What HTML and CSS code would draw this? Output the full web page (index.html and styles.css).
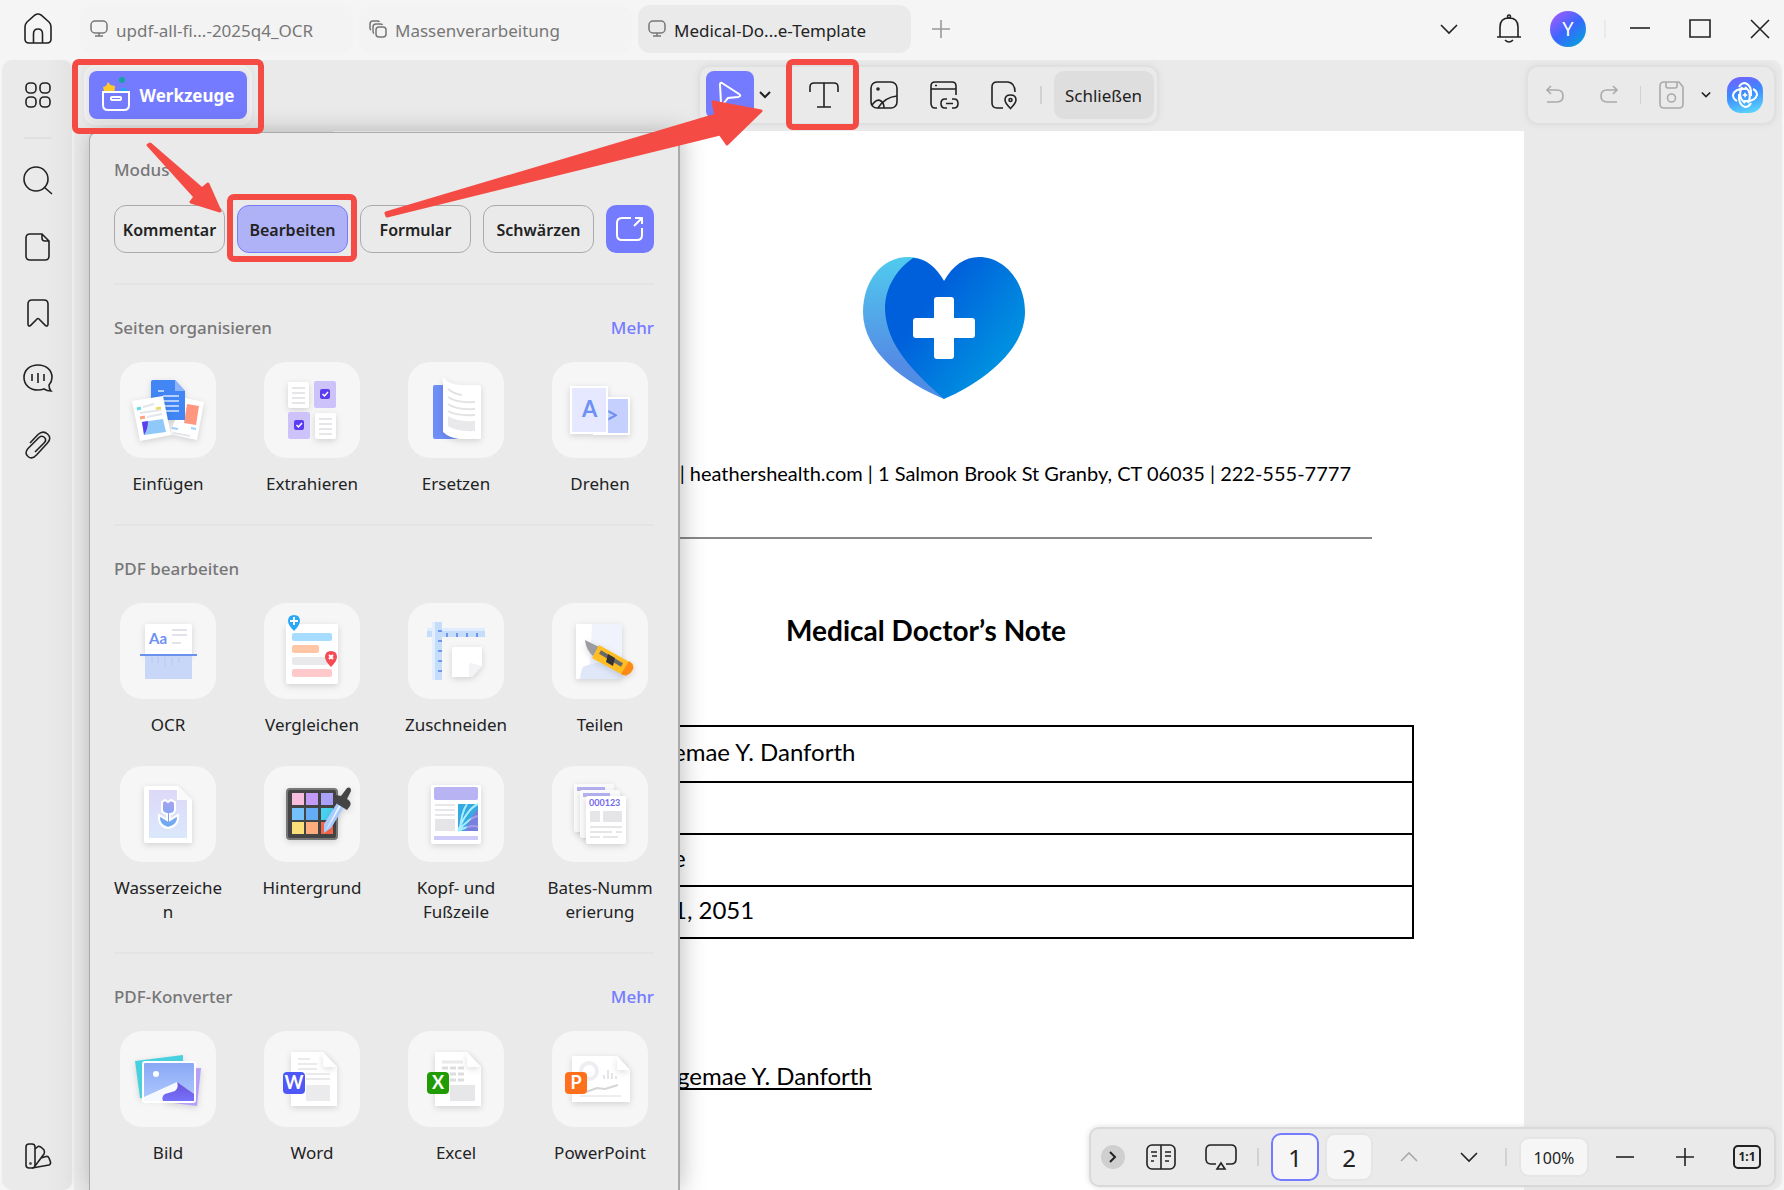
FILE: index.html
```html
<!DOCTYPE html>
<html lang="de">
<head>
    <meta charset="UTF-8">
    <meta name="viewport" content="width=device-width, initial-scale=1.0">
    <title>Medical-Doctor-Note-Template</title>
    <link rel="stylesheet" href="styles.css">
</head>
<body>

    <!-- title bar with the document tabs -->
    <header class="titlebar">
        <button class="icon-btn home" aria-label="Start">
            <svg width="32" height="34" viewBox="0 0 32 34"><path d="M3 15 Q3 12 5 10 L13 3 Q16 1 19 3 L27 10 Q29 12 29 15 V27 Q29 31 25 31 H7 Q3 31 3 27 Z M11.500 31 V22 Q11.500 17 16 17 Q20.500 17 20.500 22 V31"/></svg>
        </button>
        <nav class="tabs">
            <button class="tab">
                <svg width="18" height="18" viewBox="0 0 18 18"><rect x="1" y="1" width="16" height="12" rx="4"/><path d="M9 13 V16 M5 16 H13"/></svg>
                updf-all-fi...-2025q4_OCR
            </button>
            <button class="tab">
                <svg width="18" height="18" viewBox="0 0 18 18"><rect x="7" y="7" width="10" height="10" rx="3"/><path d="M5 13.500 Q4 13 4 11 V7 Q4 4 7 4 H11 Q13 4 13.500 5 M2 10 Q1 9.500 1 8 V4 Q1 1 4 1 H8 Q10 1 10.500 2"/></svg>
                Massenverarbeitung
            </button>
            <button class="tab active">
                <svg width="18" height="18" viewBox="0 0 18 18"><rect x="1" y="1" width="16" height="12" rx="4"/><path d="M9 13 V16 M5 16 H13"/></svg>
                Medical-Do...e-Template
            </button>
            <button class="icon-btn add" aria-label="Neuer Tab">
                <svg width="18" height="18" viewBox="0 0 18 18"><path d="M9 0 V18 M0 9 H18"/></svg>
            </button>
        </nav>
        <div class="window-tools">
            <button class="icon-btn" aria-label="Tabliste"><svg width="18" height="10" viewBox="0 0 18 10"><path d="M1 1 L9 9 L17 1"/></svg></button>
            <button class="icon-btn" aria-label="Mitteilungen"><svg width="26" height="30" viewBox="0 0 26 30"><path d="M4 23 V13 Q4 4 13 4 Q22 4 22 13 V23 M1 23 H25 M9 26 Q13 30 17 26"/><circle cx="13" cy="2.500" r="1.500"/></svg></button>
            <button class="avatar">Y</button>
            <span class="sep"></span>
            <button class="icon-btn" aria-label="Minimieren"><svg width="22" height="22" viewBox="0 0 22 22"><path d="M1 10 H21"/></svg></button>
            <button class="icon-btn" aria-label="Maximieren"><svg width="22" height="20" viewBox="0 0 22 20"><path d="M1 1 H21 V18 H1 Z"/></svg></button>
            <button class="icon-btn" aria-label="Fenster schließen"><svg width="20" height="20" viewBox="0 0 20 20"><path d="M1 1 L19 19 M19 1 L1 19"/></svg></button>
        </div>
    </header>

    <div class="main">
        <!-- left rail -->
        <aside class="rail">
            <button class="icon-btn" aria-label="Übersicht"><svg width="28" height="28" viewBox="0 0 28 28"><rect x="2" y="2" width="10" height="10" rx="4"/><rect x="16" y="2" width="10" height="10" rx="4"/><rect x="2" y="16" width="10" height="10" rx="4"/><rect x="16" y="16" width="10" height="10" rx="4"/></svg></button>
            <hr>
            <button class="icon-btn" aria-label="Suche"><svg width="30" height="30" viewBox="0 0 30 30"><circle cx="13" cy="13" r="12"/><path d="M21 21 L29 28"/></svg></button>
            <button class="icon-btn" aria-label="Seiten"><svg width="26" height="30" viewBox="0 0 26 30"><path d="M5 2 H17 L24 9 V24 Q24 28 20 28 H5 Q1 28 1 24 V6 Q1 2 5 2 Z M17 2 V6 Q17 9 20 9 H24"/></svg></button>
            <button class="icon-btn" aria-label="Lesezeichen"><svg width="24" height="30" viewBox="0 0 24 30"><path d="M2 26 V6 Q2 2 6 2 H18 Q22 2 22 6 V26 Q22 29 19.500 27.500 L13 21 Q12 20 11 21 L4.500 27.500 Q2 29 2 26 Z"/></svg></button>
            <button class="icon-btn" aria-label="Kommentare"><svg width="32" height="32" viewBox="0 0 32 32"><path d="M27 22 Q30 18.500 30 14.500 C30 7 24 2 16 2 C8 2 2 7 2 14.500 C2 22 8 27 16 27 Q19 27 22 26 Q25 28 29 28 Q27 26 27 22 Z M10 11 V18 M16 10 V20 M22 11 V18"/></svg></button>
            <button class="icon-btn" aria-label="Anlagen"><svg width="28" height="30" viewBox="0 0 28 30"><path d="M6 13 L14 4.500 Q19 0 23.500 4 Q28 8 23.500 13 L12.500 25 Q8 30 4 26.500 Q0 23 4 18.500 L15 7.500 Q18 5 20.500 7.500 Q23 10 20 13 L11 22"/></svg></button>
            <button class="icon-btn bottom" aria-label="Design"><svg width="28" height="28" viewBox="0 0 28 28"><rect x="2" y="2" width="9" height="24" rx="3"/><path d="M11 7 L14 4.500 Q16 4 18 6 L20 8 Q21 10 20 12 L11 24 M17 16 L22 14.500 Q24 14 25 16 L26.500 20 Q27 22 25 23 L8 26"/><circle cx="6.500" cy="21.500" r="0.500"/></svg></button>
        </aside>

        <section class="workspace">
            <div class="toolbars">
                <div class="toolbar tools-start">
                    <button class="tools-btn">
                        <svg width="28" height="32" viewBox="0 0 28 32">
                            <path d="M1 7 L4 6 L6 2 L8.500 5 L13 6 L12.500 11 H2 Z" fill="#ffca28" stroke="none"/>
                            <path d="M17 11 Q22 4 26 11 Z" fill="#29a3f5" stroke="none"/>
                            <circle cx="20" cy="0" r="3" fill="#14a3a0" stroke="none"/>
                            <path d="M1 12 H27 V25 Q27 30 22 30 H6 Q1 30 1 25 Z"/><rect x="9" y="17" width="10" height="3" rx="1"/>
                        </svg>
                        Werkzeuge
                    </button>
                </div>
                <div class="toolbar edit-tools">
                    <button class="select-btn" aria-label="Auswahl"><svg width="24" height="28" viewBox="0 0 24 28"><path d="M4 2 Q2 1 2 4 L3 22 Q4 25 6 22 L10 17 L20 16 Q24 15 21 13 Z"/></svg></button>
                    <button class="icon-btn mini" aria-label="Auswahlmodus"><svg width="12" height="8" viewBox="0 0 12 8"><path d="M1 1 L6 6 L11 1"/></svg></button>
                    <button class="icon-btn" aria-label="Text"><svg width="30" height="28" viewBox="0 0 30 28"><path d="M1 11 V6 Q1 2 5 2 H25 Q29 2 29 6 V11 M15 2 V26 M8 26 H22"/></svg></button>
                    <button class="icon-btn" aria-label="Bild einfügen"><svg width="30" height="30" viewBox="0 0 30 30"><rect x="2" y="2" width="26" height="26" rx="6"/><circle cx="9" cy="9" r="1"/><path d="M3 25 Q8 18 12 21 Q15 23 15 28 M9 28 Q16 17 28 16"/></svg></button>
                    <button class="icon-btn" aria-label="Link"><svg width="30" height="30" viewBox="0 0 30 30"><path d="M8 28 H6 Q2 28 2 23 V6 Q2 2 6 2 H23 Q27 2 27 6 V15 M2 9 H27 M6 5.500 H8"/><path d="M18 28 H16 Q12 28 12 23.500 Q12 19 16 19 H18 M23 19 H25 Q29 19 29 23.500 Q29 28 25 28 H23 M17 23.500 H24"/></svg></button>
                    <button class="icon-btn" aria-label="Ort"><svg width="28" height="30" viewBox="0 0 28 30"><path d="M13 28 H7 Q2 28 2 23 V7 Q2 2 7 2 H18 Q25 3 25 12"/><path d="M20.500 28.500 Q15 23 15 20 Q15 15 20.500 15 Q26 15 26 20 Q26 23 20.500 28.500 Z"/><circle cx="20.500" cy="20" r="1.500"/></svg></button>
                    <span class="sep"></span>
                    <button class="close-btn">Schließen</button>
                </div>
                <div class="toolbar file-tools">
                    <button class="icon-btn off" aria-label="Rückgängig"><svg width="20" height="20" viewBox="0 0 20 20"><path d="M6 1 L2 5 L6 9 M2 5 H12 Q18 5 18 11 Q18 17 12 17 H2"/></svg></button>
                    <button class="icon-btn off" aria-label="Wiederholen"><svg width="20" height="20" viewBox="0 0 20 20"><path d="M14 1 L18 5 L14 9 M18 5 H8 Q2 5 2 11 Q2 17 8 17 H18"/></svg></button>
                    <span class="sep"></span>
                    <button class="icon-btn off" aria-label="Speichern"><svg width="26" height="30" viewBox="0 0 26 30"><path d="M5 2 H20 L24 7 V24 Q24 28 20 28 H5 Q1 28 1 24 V6 Q1 2 5 2 Z M7 2 V6 Q7 8 9 8 H16 Q18 8 18 6 V2"/><circle cx="12.500" cy="18" r="4"/></svg></button>
                    <button class="icon-btn mini" aria-label="Speicheroptionen"><svg width="10" height="8" viewBox="0 0 12 8"><path d="M1 1 L6 6 L11 1"/></svg></button>
                    <button class="ai-btn" aria-label="KI-Assistent">
                        <svg width="26" height="26" viewBox="0 0 26 26"><path d="M7 5 Q9 1 13 1 Q20 3 19 14 M21 7 Q25 9 25 13 Q23 20 12 19 M19 21 Q17 25 13 25 Q6 23 7 12 M5 19 Q1 17 1 13 Q3 6 14 7 M10 5 Q5 15 13 21 M16 21 Q21 11 13 5"/><path d="M13 10 L14 12 L16 13 L14 14 L13 16 L12 14 L10 13 L12 12 Z" fill="#fff" stroke="none"/></svg>
                    </button>
                </div>
            </div>

            <!-- the open document -->
            <article class="paper">
                <svg class="logo" width="162" height="144" viewBox="0 0 162 144">
                    <defs>
                        <linearGradient id="heartBlue" x1="0.2" y1="0.2" x2="1" y2="0.8"><stop offset="0.15" stop-color="#005fdb"/><stop offset="0.8" stop-color="#008fe0"/></linearGradient>
                        <linearGradient id="heartEdge" x1="0" y1="0" x2="0" y2="1"><stop offset="0" stop-color="#50cbee"/><stop offset="0.75" stop-color="#548be5"/><stop offset="1" stop-color="#4a8fe3"/></linearGradient>
                    </defs>
                    <path d="M81 25 C71 8 59 1 45 1 C19 1 0 25 0 56 C0 96 42 127 81 143 Z" fill="url(#heartEdge)"/>
                    <path d="M81 25 C73 11 62 2 50 2 C34 13 22 31 22 53 C23 89 50 115 81 143 C120 126 162 94 162 56 C162 25 141 1 116 1 C102 1 90 9 81 25 Z" fill="url(#heartBlue)"/>
                    <path d="M74 41 H88 Q91 41 91 44 V62 H109 Q112 62 112 65 V79 Q112 82 109 82 H91 V100 Q91 103 88 103 H74 Q71 103 71 100 V82 H53 Q50 82 50 79 V65 Q50 62 53 62 H71 V44 Q71 41 74 41 Z" fill="#fff"/>
                </svg>
                <p class="contact">p | heathershealth.com | 1 Salmon Brook St Granby, CT 06035 | 222-555-7777</p>
                <hr>
                <h1>Medical Doctor’s Note</h1>
                <table>
                    <tr><td>emae Y. Danforth</td></tr>
                    <tr><td></td></tr>
                    <tr><td>e</td></tr>
                    <tr><td>1, 2051</td></tr>
                </table>
                <p class="signed"><u>gemae Y. Danforth</u></p>
            </article>

            <!-- tools menu -->
            <div class="panel">
                <h2>Modus</h2>
                <div class="modes">
                    <button class="mode">Kommentar</button>
                    <button class="mode active">Bearbeiten</button>
                    <button class="mode">Formular</button>
                    <button class="mode">Schwärzen</button>
                    <button class="open-btn" aria-label="In neuem Fenster öffnen"><svg width="28" height="26" viewBox="0 0 28 26"><path d="M15 2 H6 Q1 2 1 7 V19 Q1 24 6 24 H21 Q26 24 26 19 V12 M19 2 H26 V8 M26 2 L18 10"/></svg></button>
                </div>

                <section class="group">
                    <div class="group-head"><h2>Seiten organisieren</h2><a href="#">Mehr</a></div>
                    <div class="tiles">
                        <button class="tile">
                            <svg class="art" viewBox="0 0 96 96">
                                <g class="shade">
                                    <path d="M65 36 L84 40 L77 78 L49 72 Z" fill="#fff"/><path d="M67 42 L79 44 L76 63 L64 61 Z" fill="#ff9680"/>
                                    <path d="M52 66 L58 67 M71 66 L76 67" stroke="#9bd0ff" stroke-width="2"/><path d="M53 71 L70 74" stroke="#e5e5ea" stroke-width="2"/>
                                    <path d="M33 18 H55 L65 29 V58 H31 V20 Q31 18 33 18 Z" fill="#4285f4"/><path d="M55 18 V29 H65 Z" fill="#8fb4ff"/>
                                    <path d="M38 29 H44 M43 34 H59 M43 39 H59 M43 44 H59 M43 49 H59" stroke="#b5d0ff" stroke-width="2"/>
                                </g>
                                <g class="shade"><path d="M12 39 L43 34 L51 73 L20 79 Z" fill="#fff"/></g>
                                <path d="M22 60 L43 57 L46 70 L24 73 Z" fill="#91c8fa"/><path d="M22 60 L28 59 Q28 67 24 73 Z" fill="#5b40ee"/>
                                <path d="M17 47 L21 46" stroke="#64dce8" stroke-width="3"/><path d="M36 47 L41 46" stroke="#e9dc55" stroke-width="3"/><path d="M20 56 L25 55" stroke="#ffa384" stroke-width="3"/><path d="M23 45 L34 42 M20 51 L41 48 M27 55 L42 52" stroke="#e4e6ee" stroke-width="2"/>
                            </svg>
                            <span>Einfügen</span>
                        </button>
                        <button class="tile">
                            <svg class="art" viewBox="0 0 96 96">
                                <g class="shade"><rect x="24" y="20" width="21" height="26" rx="2" fill="#fff"/><rect x="51" y="51" width="21" height="26" rx="2" fill="#fff"/></g>
                                <rect x="50" y="19" width="22" height="27" rx="2" fill="#cdc3fa"/><rect x="24" y="50" width="22" height="27" rx="2" fill="#cdc3fa"/>
                                <path d="M28 26 H41 M28 31 H41 M28 36 H41 M28 41 H41 M55 57 H68 M55 62 H68 M55 67 H68 M55 72 H68" stroke="#e6e6ea" stroke-width="2"/>
                                <rect x="56" y="27" width="10" height="10" rx="2" fill="#5a3df0"/><rect x="30" y="58" width="10" height="10" rx="2" fill="#5a3df0"/>
                                <path d="M58.500 32 L60.500 34 L64 30 M32.500 63 L34.500 65 L38 61" stroke="#fff" stroke-width="1.500" fill="none"/>
                            </svg>
                            <span>Extrahieren</span>
                        </button>
                        <button class="tile">
                            <svg class="art" viewBox="0 0 96 96">
                                <path d="M27 23 H50 V77 H27 Q25 77 25 75 V25 Q25 23 27 23 Z" fill="#6f8ff8"/>
                                <g class="shade"><path d="M35 15 Q41 23 53 23 H70 Q73 23 73 26 V77 H54 Q42 77 35 70 Z" fill="#fff"/></g>
                                <path d="M40 27 Q46 32 54 33 M40 35 Q48 41 67 40 M40 42 Q48 48 67 47 M40 49 Q48 54 67 53" stroke="#e3e3e6" stroke-width="2" fill="none"/><path d="M40 54 Q48 60 67 59 V69 Q48 70 40 64 Z" fill="#e9e9eb"/>
                            </svg>
                            <span>Ersetzen</span>
                        </button>
                        <button class="tile">
                            <svg class="art" viewBox="0 0 96 96">
                                <g class="shade"><rect x="42" y="36" width="35" height="36" fill="#c6d0ff" stroke="#fff" stroke-width="2"/><text class="art-letter" x="54" y="61">&gt;</text><rect x="19" y="25" width="36" height="46" fill="#e5e8ff" stroke="#fff" stroke-width="2"/></g>
                                <text class="art-letter" x="30" y="55">A</text>
                            </svg>
                            <span>Drehen</span>
                        </button>
                    </div>
                </section>

                <section class="group">
                    <div class="group-head"><h2>PDF bearbeiten</h2></div>
                    <div class="tiles">
                        <button class="tile">
                            <svg class="art" viewBox="0 0 96 96">
                                <g class="shade"><path d="M25 23 Q25 21 27 21 H70 Q72 21 72 23 V52 H25 Z" fill="#fff"/></g>
                                <text class="art-ocr" x="29" y="41">Aa</text><path d="M52 27 H67 M52 32 H67 M52 40 H61" stroke="#e2e2ea" stroke-width="2"/>
                                <path d="M25 53 H72 V76 H25 Z" fill="#c8d7f8"/><path d="M32 54 V60 M38 54 V62 M45 54 V64 M52 54 V62 M59 54 V60" stroke="#bed0f6"/><path d="M20 52 H77" stroke="#6a92ec" stroke-width="2"/>
                            </svg>
                            <span>OCR</span>
                        </button>
                        <button class="tile">
                            <svg class="art" viewBox="0 0 96 96">
                                <g class="shade"><rect x="22" y="21" width="52" height="60" rx="2" fill="#fff"/></g>
                                <rect x="28" y="30" width="40" height="8" rx="2" fill="#a6dcff"/><rect x="28" y="42" width="27" height="8" rx="2" fill="#ffc6a6"/><rect x="28" y="54" width="36" height="8" rx="2" fill="#e9e9eb"/><rect x="28" y="66" width="40" height="8" rx="2" fill="#ffc8cb"/>
                                <path d="M24 18 Q24 12 30 12 Q36 12 36 18 Q36 22 30 28 Q24 22 24 18 Z" fill="#29a8fa"/><path d="M30 14 V22 M26 18 H34" stroke="#fff"/>
                                <path d="M61 54 Q61 48 67 48 Q73 48 73 54 Q73 58 67 64 Q61 58 61 54 Z" fill="#f44b55"/><path d="M65 52 L69 56 M69 52 L65 56" stroke="#fff"/>
                            </svg>
                            <span>Vergleichen</span>
                        </button>
                        <button class="tile">
                            <svg class="art" viewBox="0 0 96 96">
                                <rect x="19" y="25" width="58" height="9" fill="#c6dcfb"/><rect x="19" y="25" width="58" height="3" fill="#dfecff"/><rect x="24" y="19" width="10" height="58" fill="#c6dcfb"/><rect x="24" y="19" width="3" height="58" fill="#e3eeff"/>
                                <path d="M39 30 V34 M49 30 V34 M59 30 V34 M69 30 V34 M30 28 H34 M30 38 H34 M30 48 H34 M30 58 H34 M30 68 H34" stroke="#6b98ed"/>
                                <g class="shade"><path d="M46 44 H74 V63 L64 74 H44 V46 Q44 44 46 44 Z" fill="#fff"/></g><path d="M61 74 V62 Q61 60 63 60 L74 63 L64 74 Z" fill="#f3f3f5"/>
                            </svg>
                            <span>Zuschneiden</span>
                        </button>
                        <button class="tile">
                            <svg class="art" viewBox="0 0 96 96">
                                <g class="shade"><rect x="24" y="21" width="46" height="55" fill="#f0f3fc"/></g><path d="M24 21 H40 L38 60 L34 66 L28 76 H24 Z" fill="#fff"/><path d="M24 76 Q28 62 37 62 L43 60 H70 V76 Z" fill="#dfe7f8"/><path d="M24 76 V21 H34 V60 Q29 64 28 76 Z" fill="#fff"/>
                                <g class="shade"><path d="M33 37 L47 44 L41 53 Q34 47 33 37 Z" fill="#9b9c9f"/><path d="M47 42 L81 61 Q80 70 71 72 L40 55 Z" fill="#ffbd24"/><path d="M77 58 Q84 63 80 68 Q75 75 69 71 Z" fill="#ff8b17"/></g>
                                <path d="M48 49 L70 62" stroke="#68696b" stroke-width="4"/><path d="M56 51 L63 55 L61 63 L54 59 Z" fill="#333"/>
                            </svg>
                            <span>Teilen</span>
                        </button>
                        <button class="tile">
                            <svg class="art" viewBox="0 0 96 96">
                                <defs><linearGradient id="mark" x1="0" y1="0" x2="0" y2="1"><stop offset="0" stop-color="#ddd9f8"/><stop offset="1" stop-color="#dbe8fb"/></linearGradient><linearGradient id="tulip" x1="0" y1="0" x2="0" y2="1"><stop offset="0" stop-color="#a9a3f0"/><stop offset="1" stop-color="#65aaf2"/></linearGradient></defs>
                                <g class="shade"><path d="M26 20 H58 L72 34 V77 H26 Q24 77 24 75 V22 Q24 20 26 20 Z" fill="#fff"/></g>
                                <path d="M29 24 H57 V34 H67 V72 H29 Z" fill="url(#mark)"/><path d="M58 20 V34 H72 Z" fill="#fafafa"/>
                                <path d="M42 36 L45 34 L48 36 L51 34 L55 36 V44 Q54 48 50 48 V54 L58 49 Q59 60 48 62 Q38 60 39 49 L47 54 V48 Q42 47 42 44 Z" fill="url(#tulip)" stroke="#fff" stroke-width="2"/>
                            </svg>
                            <span>Wasserzeiche<br>n</span>
                        </button>
                        <button class="tile">
                            <svg class="art" viewBox="0 0 96 96">
                                <g class="shade"><rect x="23" y="23" width="50" height="50" rx="3" fill="#444" stroke="#777" stroke-width="2"/></g>
                                <path d="M28 27 H40 V39 H28 Z" fill="#f7bddd"/><path d="M42 27 H54 V39 H42 Z" fill="#c39bf6"/><path d="M57 27 H69 V39 H57 Z" fill="#aaa1fb"/>
                                <path d="M28 42 H40 V54 H28 Z" fill="#75c2fb"/><path d="M42 42 H54 V54 H42 Z" fill="#64acf6"/><path d="M57 42 H69 V54 H57 Z" fill="#48d2ef"/>
                                <path d="M28 56 H40 V68 H28 Z" fill="#fbdf79"/><path d="M42 56 H54 V68 H42 Z" fill="#fdac7e"/><path d="M57 56 H69 V68 H57 Z" fill="#fb694b"/>
                                <g class="shade"><path d="M73 37 L80 41 L67 62 L60 67 L60 58 Z" fill="#a8caff"/><path d="M75 39 L77 40 L65 60 L61 66 Z" fill="#eaf3ff"/><path d="M72 29 L77 30 L83 22 Q87 20 87 25 L83 33 Q88 36 86 40 L83 44 L70 36 Z" fill="#444"/></g>
                            </svg>
                            <span>Hintergrund</span>
                        </button>
                        <button class="tile">
                            <svg class="art" viewBox="0 0 96 96">
                                <g class="shade"><rect x="23" y="19" width="50" height="59" rx="2" fill="#fff"/></g><rect x="26" y="21" width="44" height="13" rx="2" fill="#b8b3f3"/>
                                <path d="M27 39 H47 M27 44 H47 M27 49 H47" stroke="#e7e7eb" stroke-width="2"/><rect x="27" y="53" width="20" height="12" fill="#e5e5e8"/><rect x="50" y="38" width="20" height="27" fill="#35a9e0"/>
                                <path d="M50 65 Q59 43 70 38 M50 65 Q62 51 70 50 M50 65 Q64 58 70 61 M52 65 Q53 47 59 38" stroke="#a8edff" stroke-width="2" fill="none"/><path d="M57 65 Q63 50 70 43 V65 Z" fill="#a466d9" opacity="0.6"/><path d="M26 72 H70" stroke="#cecafa" stroke-width="4"/>
                            </svg>
                            <span>Kopf- und<br>Fußzeile</span>
                        </button>
                        <button class="tile">
                            <svg class="art" viewBox="0 0 96 96">
                                <g class="shade"><rect x="22" y="18" width="40" height="48" rx="2" fill="#fafafa"/></g><path d="M25 23 H53" stroke="#b6b1f1" stroke-width="4"/>
                                <g class="shade"><rect x="28" y="24" width="40" height="48" rx="2" fill="#fafafa"/></g><path d="M31 29 H58" stroke="#b6b1f1" stroke-width="4"/>
                                <g class="shade"><rect x="34" y="30" width="40" height="48" rx="2" fill="#fff"/></g><text class="art-number" x="37" y="40">000123</text>
                                <rect x="38" y="45" width="10" height="11" rx="1" fill="#e5e5e7"/><rect x="51" y="45" width="19" height="11" rx="1" fill="#e5e5e7"/><path d="M38 61 H70 M38 66 H60 M64 66 H70 M38 71 H48 M51 71 H66" stroke="#e6e6e8" stroke-width="2"/>
                            </svg>
                            <span>Bates-Numm<br>erierung</span>
                        </button>
                    </div>
                </section>

                <section class="group">
                    <div class="group-head"><h2>PDF-Konverter</h2><a href="#">Mehr</a></div>
                    <div class="tiles">
                        <button class="tile">
                            <svg class="art" viewBox="0 0 96 96">
                                <defs><linearGradient id="sky" x1="0" y1="0" x2="0" y2="1"><stop offset="0" stop-color="#88a7f5"/><stop offset="1" stop-color="#b1cbff"/></linearGradient><linearGradient id="dune" x1="0" y1="0" x2="0" y2="1"><stop offset="0" stop-color="#6855d9"/><stop offset="1" stop-color="#7771fa"/></linearGradient></defs>
                                <g class="shade"><path d="M15 30 L63 24 V68 L20 67 Z" fill="#49d0df"/><path d="M34 39 L81 37 L77 75 L45 71 Z" fill="#b6a0f7"/></g>
                                <rect x="23" y="31" width="52" height="40" rx="2" fill="url(#sky)" stroke="#fff" stroke-width="2"/><path d="M24 66 L57 51 L74 64 V70 H24 Z" fill="#f6faff"/><path d="M57 51 Q59 57 55 60 L45 63 Q41 66 43 70 H74 V63 Z" fill="url(#dune)"/><circle cx="36" cy="43" r="3" fill="#fff"/>
                            </svg>
                            <span>Bild</span>
                        </button>
                        <button class="tile">
                            <svg class="art" viewBox="0 0 96 96">
                                <g class="shade"><path d="M27 21 H59 L73 36 V75 H27 Z" fill="#fff"/></g><g class="shade"><path d="M59 21 V34 Q59 36 62 36 H73 Z" fill="#fff"/></g>
                                <path d="M34 28 H46 M34 33 H53 M34 38 H53 M42 43 H66 M42 48 H66" stroke="#eaeaec" stroke-width="2"/><rect x="42" y="54" width="24" height="16" fill="#ebebed"/>
                                <rect x="19" y="41" width="22" height="22" rx="4" fill="#4d58f7"/><text class="art-badge" x="30" y="58">W</text>
                            </svg>
                            <span>Word</span>
                        </button>
                        <button class="tile">
                            <svg class="art" viewBox="0 0 96 96">
                                <g class="shade"><path d="M27 21 H59 L73 36 V75 H27 Z" fill="#fff"/></g><g class="shade"><path d="M59 21 V34 Q59 36 62 36 H73 Z" fill="#fff"/></g>
                                <path d="M34 31 H55" stroke="#eaeaec" stroke-width="3"/><path d="M34 37 H56 M42 43 H56 M42 49 H56" stroke="#dddde0" stroke-width="3" stroke-dasharray="6 2"/><rect x="42" y="54" width="25" height="16" fill="#e7e7e9"/>
                                <rect x="19" y="41" width="22" height="22" rx="4" fill="#219b04"/><text class="art-badge" x="30" y="58">X</text>
                            </svg>
                            <span>Excel</span>
                        </button>
                        <button class="tile">
                            <svg class="art" viewBox="0 0 96 96">
                                <g class="shade"><path d="M20 25 H65 L78 39 V71 H20 Z" fill="#fff"/></g><g class="shade"><path d="M65 25 V37 Q65 39 68 39 H78 Z" fill="#fff"/></g>
                                <circle cx="37" cy="40" r="8" fill="none" stroke="#eeeef2" stroke-width="4"/><path d="M52 48 V44 M56 48 V39 M60 48 V42 M64 48 V45" stroke="#e5e5e9" stroke-width="2"/><path d="M34 61 L45 57 L53 58 L66 54" stroke="#d5d5d8" fill="none"/><path d="M28 65 H69" stroke="#eee"/>
                                <rect x="13" y="41" width="22" height="22" rx="4" fill="#ff701d"/><text class="art-badge" x="24" y="58">P</text>
                            </svg>
                            <span>PowerPoint</span>
                        </button>
                    </div>
                </section>
            </div>

            <!-- page navigation -->
            <nav class="pager">
                <button class="collapse" aria-label="Einklappen"><svg width="8" height="12" viewBox="0 0 8 12"><path d="M1 1 L6 6 L1 11"/></svg></button>
                <button class="icon-btn" aria-label="Seitenansicht"><svg width="30" height="28" viewBox="0 0 30 28"><rect x="1" y="2" width="28" height="24" rx="5"/><path d="M15 2 V26 M5 9 H11 M6 13 H11 M5 18 H8 M19 9 H25 M19 13 H25 M19 18 H23"/></svg></button>
                <button class="icon-btn" aria-label="Präsentation"><svg width="32" height="28" viewBox="0 0 32 28"><path d="M11 21 H6 Q1 21 1 16 V7 Q1 2 6 2 H26 Q31 2 31 7 V16 Q31 21 26 21 H21 M12 26 L16 20 L20 26 Z"/></svg></button>
                <span class="sep"></span>
                <span class="pages"><button class="page active">1</button><button class="page">2</button></span>
                <button class="icon-btn off" aria-label="Vorherige Seite"><svg width="18" height="10" viewBox="0 0 18 10"><path d="M1 9 L9 1 L17 9"/></svg></button>
                <button class="icon-btn" aria-label="Nächste Seite"><svg width="18" height="10" viewBox="0 0 18 10"><path d="M1 1 L9 9 L17 1"/></svg></button>
                <span class="sep"></span>
                <button class="zoom">100%</button>
                <button class="icon-btn" aria-label="Verkleinern"><svg width="18" height="18" viewBox="0 0 18 18"><path d="M0 9 H18"/></svg></button>
                <button class="icon-btn" aria-label="Vergrößern"><svg width="18" height="18" viewBox="0 0 18 18"><path d="M0 9 H18 M9 0 V18"/></svg></button>
                <button class="ratio">1:1</button>
            </nav>
        </section>
    </div>

    <!-- highlight frames and arrows -->
    <svg class="marks" width="1784" height="1190" viewBox="0 0 1784 1190">
        <g class="frames">
            <rect x="75" y="62" width="186" height="69" rx="4"/>
            <rect x="230" y="197" width="124" height="62" rx="4"/>
            <rect x="789" y="62" width="67" height="65" rx="4"/>
        </g>
        <path d="M148 145 L150 144 L202 189 L208 184 L220 211 L191 202 L195 197 Z"/>
        <path d="M386 213 L716 115 L713 102 L761 111 L727 144 L720 134 L387 216 Z"/>
    </svg>

</body>
</html>
```
FILE: styles.css
```css
* {
    box-sizing: border-box;
}
body {
    margin: 0;
    height: 100vh;
    display: flex;
    flex-direction: column;
    overflow: hidden;
    position: relative;
    background: #f5f5f5;
    color: #222;
    font-family: "Noto Sans", "Open Sans", sans-serif;
    font-size: 17px;
    line-height: 24px;
}
button {
    border: none;
    background: none;
    padding: 0;
    font: inherit;
    color: inherit;
    display: flex;
    align-items: center;
    justify-content: center;
    flex-shrink: 0;
}
svg {
    display: block;
    flex-shrink: 0;
}
button svg {
    fill: none;
    stroke: currentColor;
    stroke-width: 2;
    overflow: visible;
}
.icon-btn {
    width: 48px;
    height: 48px;
}
.icon-btn svg {
    stroke-width: 1.6;
}
.off {
    color: #aaa;
}
.sep {
    width: 2px;
    height: 18px;
    background: #d2d2d2;
    flex-shrink: 0;
}

/* title bar */
.titlebar {
    height: 60px;
    flex-shrink: 0;
    display: flex;
    align-items: center;
    padding: 0 0 2px 14px;
}
.tabs {
    display: flex;
    align-items: center;
    gap: 6px;
    margin-left: 18px;
    flex: 1;
}
.tab {
    width: 273px;
    height: 48px;
    border-radius: 12px;
    justify-content: flex-start;
    gap: 8px;
    padding: 3px 10px 0;
    background: #f3f3f3;
    color: #777;
}
.tab svg {
    stroke-width: 1.5;
    color: #777;
    margin-bottom: 4px;
}
.tab.active {
    background: #eaeaea;
    color: #222;
}
.add {
    color: #999;
}
.window-tools {
    display: flex;
    align-items: center;
}
.window-tools .icon-btn {
    width: 60px;
}
.avatar {
    width: 36px;
    height: 36px;
    margin: 0 18px 0 11px;
    border-radius: 50%;
    background: linear-gradient(140deg, #9b5cff 10%, #3a67ff 50%, #00a5d5 95%);
    color: #fff;
    font-size: 20px;
}
.window-tools .sep {
    background: #eaeaea;
    margin-right: 4px;
}
.window-tools .icon-btn:last-child {
    margin-right: -6px;
}

.main {
    flex: 1;
    display: flex;
    min-height: 0;
    padding: 0 2px;
}

/* left rail */
.rail {
    width: 72px;
    display: flex;
    flex-direction: column;
    align-items: center;
    gap: 18px;
    padding: 11px 0 10px 2px;
    border-radius: 10px;
    background: linear-gradient(90deg, #eaeaea 60%, #e4e4e4);
    border-right: 2px solid #f0f0f0;
}
.rail hr {
    width: 28px;
    margin: 0;
    border: none;
    border-top: 2px solid #e0e0e0;
}
.rail .bottom {
    margin-top: auto;
}

.workspace {
    flex: 1;
    display: flex;
    flex-direction: column;
    min-width: 0;
    position: relative;
    background: #ebeaeb;
    border-radius: 0 10px 10px 0;
}

/* toolbars */
.toolbars {
    display: grid;
    grid-template-columns: 1fr auto 1fr;
    padding: 5px 6px 6px;
}
.toolbar {
    display: flex;
    align-items: center;
    height: 60px;
    border: 2px solid #e1e0e1;
    border-radius: 12px;
    box-shadow: 0 0 6px #dcdcdc;
    color: #222;
}
.tools-start {
    justify-self: start;
    margin-left: 4px;
    padding: 0 3px;
    border-color: #eeeeee;
}
.tools-btn {
    height: 48px;
    width: 158px;
    padding-top: 2px;
    border-radius: 8px;
    background: #757bff;
    color: #fff;
    font-weight: 700;
    gap: 10px;
}
.edit-tools {
    padding: 0 3px 0 6px;
}
.edit-tools .icon-btn {
    width: 60px;
}
.edit-tools .mini {
    width: 22px;
}
.edit-tools .mini + .icon-btn {
    margin-left: 18px;
}
.mini svg {
    stroke-width: 2;
}
.select-btn {
    width: 48px;
    height: 48px;
    border-radius: 8px;
    background: #757bff;
    color: #fff;
}
.edit-tools .sep {
    margin: 0 12px 0 6px;
}
.close-btn {
    width: 100px;
    height: 48px;
    padding-top: 2px;
    border-radius: 10px;
    background: #dfdedf;
}
.file-tools {
    justify-self: end;
    width: 250px;
}
.file-tools .icon-btn {
    width: 54px;
}
.file-tools .mini {
    width: 14px;
}
.file-tools .sep {
    width: 1px;
    margin: 0 4px;
}
.ai-btn {
    width: 36px;
    height: 36px;
    margin-left: 14px;
    border-radius: 14px;
    background: linear-gradient(165deg, #785cff, #3b8bff 45%, #5fe0fb);
    color: #fff;
}

/* document */
.paper {
    flex: 1;
    margin: 0 258px 0 260px;
    background: #fff;
    color: #000;
    font-family: Lato, sans-serif;
    font-size: 24px;
}
.logo {
    margin: 125px auto 0;
    position: relative;
    left: 15px;
}
.contact {
    margin: 61px 173px 52px 0;
    text-align: right;
    font-size: 20px;
}
.paper hr {
    margin: 0 152px;
    border: none;
    border-top: 2px solid #888;
}
.paper h1 {
    margin: 73px 6px 0 0;
    text-align: center;
    font-size: 28px;
    line-height: 36px;
}
.paper table {
    width: calc(100% - 220px);
    margin: 77px 110px 0;
    border-collapse: collapse;
}
.paper td {
    height: 52px;
    padding: 0 0 4px 227px;
    border: 2px solid #000;
}
.paper tr:first-child td {
    height: 56px;
}
.signed {
    margin: 125px 0 0 343px;
}
.signed u {
    text-underline-offset: 3px;
    text-decoration-skip-ink: none;
}

/* tools menu */
.panel {
    position: absolute;
    top: 72px;
    left: 15px;
    bottom: 0;
    width: 591px;
    padding: 25px 24px 0;
    overflow: hidden;
    background: #eaeaeb;
    border: 2px solid #aaa;
    border-width: 1px 2px 0 1px;
    border-radius: 8px 0 0 0;
    box-shadow: 2px 0 24px rgba(0, 0, 0, 0.25);
}
.panel h2 {
    margin: 0;
    font-size: 17px;
    line-height: 24px;
    font-weight: 500;
    color: #777;
}
.panel a {
    color: #757bff;
    font-weight: 500;
    text-decoration: none;
}
.modes {
    display: grid;
    grid-template-columns: repeat(4, 1fr) 48px;
    gap: 12px;
    margin: 23px 0 30px;
}
.mode {
    height: 48px;
    padding-top: 2px;
    border: 1px solid #aaa;
    border-radius: 12px;
    font-size: 16px;
    font-weight: 600;
}
.mode.active {
    background: #b0b2f7;
    border-color: #757bff;
}
.open-btn {
    height: 48px;
    border-radius: 10px;
    background: #757bff;
    color: #fff;
}
.group {
    border-top: 2px solid #e4e4e5;
    padding: 31px 0 28px;
}
.group-head {
    display: flex;
    justify-content: space-between;
    margin-bottom: 22px;
}
.tiles {
    display: grid;
    grid-template-columns: repeat(4, 96px);
    justify-content: space-between;
    row-gap: 29px;
    padding: 0 6px;
}
.tile {
    flex-direction: column;
    justify-content: flex-start;
    gap: 14px;
    white-space: nowrap;
}
.tile .art {
    width: 96px;
    height: 96px;
    border-radius: 22px;
    background: #f6f6f7;
    stroke: none;
    overflow: hidden;
}
.shade {
    filter: drop-shadow(0 2px 3px rgba(0, 0, 0, 0.14));
}
.art-letter,
.art-ocr,
.art-number,
.art-badge {
    font-family: Lato, sans-serif;
    font-weight: 700;
}
.art-letter {
    font-size: 22px;
    fill: #6d91f2;
}
.art-ocr {
    font-size: 15px;
    fill: #6d91f2;
}
.art-number {
    font-size: 9px;
    fill: #7469ee;
}
.art-badge {
    font-size: 18px;
    fill: #fff;
    text-anchor: middle;
}

/* page navigation */
.pager {
    position: absolute;
    right: 6px;
    bottom: 3px;
    height: 60px;
    display: flex;
    align-items: center;
    padding: 0 13px 0 10px;
    background: #ebeaeb;
    border: 2px solid #d9d9da;
    border-radius: 10px;
    box-shadow: 0 0 6px #ddd;
}
.pager .icon-btn {
    width: 60px;
}
.pager .sep {
    margin: 0 12px 0 6px;
}
.collapse {
    width: 24px;
    height: 24px;
    margin-right: 6px;
    border-radius: 50%;
    background: #cfcfd0;
}
.pages {
    display: flex;
    gap: 6px;
    margin-right: 6px;
}
.page {
    width: 48px;
    height: 48px;
    padding-top: 2px;
    border: 2px solid #e5e5e6;
    border-radius: 10px;
    background: #f6f6f7;
    font-size: 24px;
}
.page.active {
    border-color: #757bff;
}
.zoom {
    width: 70px;
    height: 40px;
    margin-right: 6px;
    padding-top: 2px;
    border: 2px solid #e5e5e6;
    border-radius: 10px;
    background: #f6f6f7;
    font-size: 16px;
}
.ratio {
    width: 28px;
    height: 24px;
    margin-left: 18px;
    border: 2px solid #222;
    border-radius: 5px;
    font-size: 12px;
    font-weight: 700;
}

/* frames and arrows drawn over everything */
.marks {
    position: absolute;
    top: 0;
    left: 0;
    pointer-events: none;
    fill: #f54b45;
    stroke: #f54b45;
    stroke-width: 3;
    stroke-linejoin: round;
}
.frames {
    fill: none;
    stroke-width: 6;
}
```
